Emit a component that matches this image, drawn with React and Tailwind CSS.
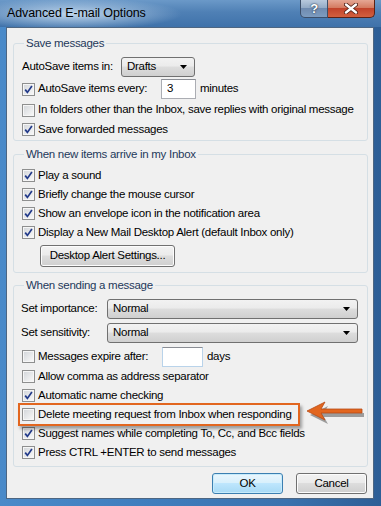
import React from "react";

const FONT = "font-['Liberation_Sans',Arial,sans-serif]";

function Check({ checked }) {
  return (
    <span className="w-[13px] h-[13px] shrink-0 border border-[#8e8f8f] bg-[#f4f4f4] flex items-center justify-center">
      <span className="w-[11px] h-[11px] border border-[#f6f6f6] bg-[linear-gradient(135deg,#d5d8dc,#f7f7f7)] flex items-center justify-center">
        {checked && (
          <svg width="9" height="9" viewBox="0 0 9 9">
            <path d="M1.2 4.6 L3.4 7.4 L7.9 1" fill="none" stroke="#223a8a" strokeWidth="1.7" />
          </svg>
        )}
      </span>
    </span>
  );
}

function CheckRow({ checked, children, className = "" }) {
  return (
    <div className={`h-[19px] flex items-center ${className}`}>
      <Check checked={checked} />
      <span className="ml-[3px] whitespace-nowrap">{children}</span>
    </div>
  );
}

function Arrow() {
  return (
    <svg width="8" height="5" viewBox="0 0 8 5">
      <path d="M0 0 H7 L3.5 4 Z" fill="#000" />
    </svg>
  );
}

function Combo({ value, className = "" }) {
  return (
    <div
      className={`h-[20px] rounded-[3px] border border-[#707070] bg-[linear-gradient(#f2f2f2,#ebebeb_45%,#dddddd_50%,#cfcfcf)] flex items-center pl-[5px] pr-[6px] ${className}`}
    >
      <span className="flex-1">{value}</span>
      <Arrow />
    </div>
  );
}

function TextBox({ value, className = "" }) {
  return (
    <div
      className={`h-[20px] bg-white border border-[#abadb3] border-t-[#8a8d94] flex items-center pl-[5px] ${className}`}
    >
      {value}
    </div>
  );
}

function Group({ title, children, className = "" }) {
  return (
    <fieldset className={`min-w-0 border border-[#d5dfe5] rounded-[3px] px-[8px] ${className}`}>
      <legend className="ml-[2px] px-[2px] h-[15px] leading-[15px] text-[#1e395b]">{title}</legend>
      {children}
    </fieldset>
  );
}

function Btn({ children, primary }) {
  return (
    <div
      className={`w-[71px] h-[21px] rounded-[3px] border flex items-center justify-center ${
        primary
          ? "border-[#3c7fb1] bg-[linear-gradient(#eaf6fd,#d9f0fc_45%,#bee6fd_50%,#a7d9f5)] shadow-[inset_0_0_0_1px_#c7ebfb]"
          : "border-[#707070] bg-[linear-gradient(#f2f2f2,#ebebeb_45%,#dddddd_50%,#cfcfcf)] shadow-[inset_0_0_0_1px_#fcfcfc]"
      }`}
    >
      {children}
    </div>
  );
}

export default function App() {
  return (
    <div
      className={`w-[381px] h-[506px] flex flex-col text-[11.5px] tracking-[-0.28px] text-black ${FONT} bg-[linear-gradient(90deg,#4a8ac9,#3f7dbd_40%,#3a72ae_75%,#2d5e96)]`}
    >
      {/* title bar */}
      <div className="h-[27px] shrink-0 flex items-start bg-[radial-gradient(ellipse_110px_16px_at_72px_14px,rgba(210,228,245,0.85),rgba(160,195,230,0)_100%),linear-gradient(180deg,#6b99c8,#4f80b5_45%,#3f72aa)]">
        <div className="pl-[7px] pt-[6px] flex-1 text-[12.5px] tracking-[-0.1px] leading-[15px] text-black">Advanced E-mail Options</div>
        <div className="flex mr-[6px]">
          <div className="w-[28px] h-[18px] rounded-bl-[5px] border border-t-0 border-[#3c4f6a] bg-[linear-gradient(#b8c9dd,#94abc6_45%,#6f8bb0_50%,#7d9cc0)] flex items-center justify-center text-white font-bold text-[13px] [text-shadow:0_0_2px_#24364f,0_0_1px_#24364f]">
            ?
          </div>
          <div className="w-[47px] h-[18px] rounded-br-[5px] border border-t-0 border-l-0 border-[#5a2216] bg-[linear-gradient(#e5a794,#d47b61_45%,#c1432a_50%,#d2603f)] flex items-center justify-center">
            <svg width="14" height="11" viewBox="0 0 14 11">
              <path d="M2 1.5 L12 9.5 M12 1.5 L2 9.5" stroke="#4a1c12" strokeWidth="4" strokeLinecap="round" />
              <path d="M2 1.5 L12 9.5 M12 1.5 L2 9.5" stroke="#ffffff" strokeWidth="2.4" strokeLinecap="round" />
            </svg>
          </div>
        </div>
      </div>

      {/* client */}
      <div className="ml-[6px] mr-[7px] mb-[7px] flex-1 border border-[#4d6682] bg-[#f0f0f0] pl-[6px] pr-[5px] pt-[8px] flex flex-col">
        <Group title="Save messages" className="pb-[1px]">
          <div className="h-[22px] mt-[5px] flex items-center">
            <span className="w-[99px] whitespace-nowrap">AutoSave items in:</span>
            <Combo value="Drafts" className="w-[74px]" />
          </div>
          <div className="h-[22px] flex items-center">
            <Check checked />
            <span className="ml-[3px] w-[123px] whitespace-nowrap">AutoSave items every:</span>
            <TextBox value="3" className="w-[35px]" />
            <span className="ml-[4px]">minutes</span>
          </div>
          <CheckRow className="h-[20px]">In folders other than the Inbox, save replies with original message</CheckRow>
          <CheckRow checked>Save forwarded messages</CheckRow>
        </Group>

        <Group title="When new items arrive in my Inbox" className="mt-[6px] pb-[5px]">
          <div className="pt-[4px]">
            <CheckRow checked>Play a sound</CheckRow>
            <CheckRow checked>Briefly change the mouse cursor</CheckRow>
            <CheckRow checked>Show an envelope icon in the notification area</CheckRow>
            <CheckRow checked>Display a New Mail Desktop Alert (default Inbox only)</CheckRow>
          </div>
          <div className="mt-[3px] ml-[18px] w-[135px] h-[22px] rounded-[3px] border border-[#707070] bg-[linear-gradient(#f2f2f2,#ebebeb_45%,#dddddd_50%,#cfcfcf)] shadow-[inset_0_0_0_1px_#fcfcfc] flex items-center justify-center">
            Desktop Alert Settings...
          </div>
        </Group>

        <Group title="When sending a message" className="mt-[5px] pb-[4px]">
          <div className="pt-[6px] flex flex-col gap-[4px]">
            <div className="flex items-center">
              <span className="w-[86px] -ml-[1px] whitespace-nowrap">Set importance:</span>
              <Combo value="Normal" className="flex-1 mr-[1px]" />
            </div>
            <div className="flex items-center">
              <span className="w-[86px] -ml-[1px] whitespace-nowrap">Set sensitivity:</span>
              <Combo value="Normal" className="flex-1 mr-[1px]" />
            </div>
          </div>
          <div className="h-[21px] mt-[3px] flex items-center">
            <Check checked={false} />
            <span className="ml-[3px] w-[124px] whitespace-nowrap">Messages expire after:</span>
            <TextBox value="" className="w-[41px] border-[#b9d3ea]" />
            <span className="ml-[4px]">days</span>
          </div>
          <CheckRow>Allow comma as address separator</CheckRow>
          <CheckRow checked>Automatic name checking</CheckRow>
          <div className="relative -my-[2px] -ml-[4px] w-[282px] h-[23px] border-2 border-[#e2661f] pl-[2px] flex items-center shadow-[2px_3px_3px_rgba(0,0,0,0.35)]">
            <Check checked={false} />
            <span className="ml-[3px] whitespace-nowrap">Delete meeting request from Inbox when responding</span>
            <svg className="absolute left-[286px] top-[-4px]" width="62" height="28" viewBox="0 0 62 28">
              <g transform="translate(2 3)" opacity="0.35">
                <path d="M2 11 L20 2 L16 9 H56 V13 H16 L20 20 Z" fill="#000" />
              </g>
              <path d="M1 10 L19 1 L15 8 H56 V12 H15 L19 19 Z" fill="#e2661f" stroke="#b84a14" strokeWidth="0.8" />
            </svg>
          </div>
          <CheckRow checked>Suggest names while completing To, Cc, and Bcc fields</CheckRow>
          <CheckRow checked>Press CTRL +ENTER to send messages</CheckRow>
        </Group>

        <div className="mt-[6px] flex justify-end gap-[13px] pr-[1px]">
          <Btn primary>OK</Btn>
          <Btn>Cancel</Btn>
        </div>
      </div>
    </div>
  );
}
